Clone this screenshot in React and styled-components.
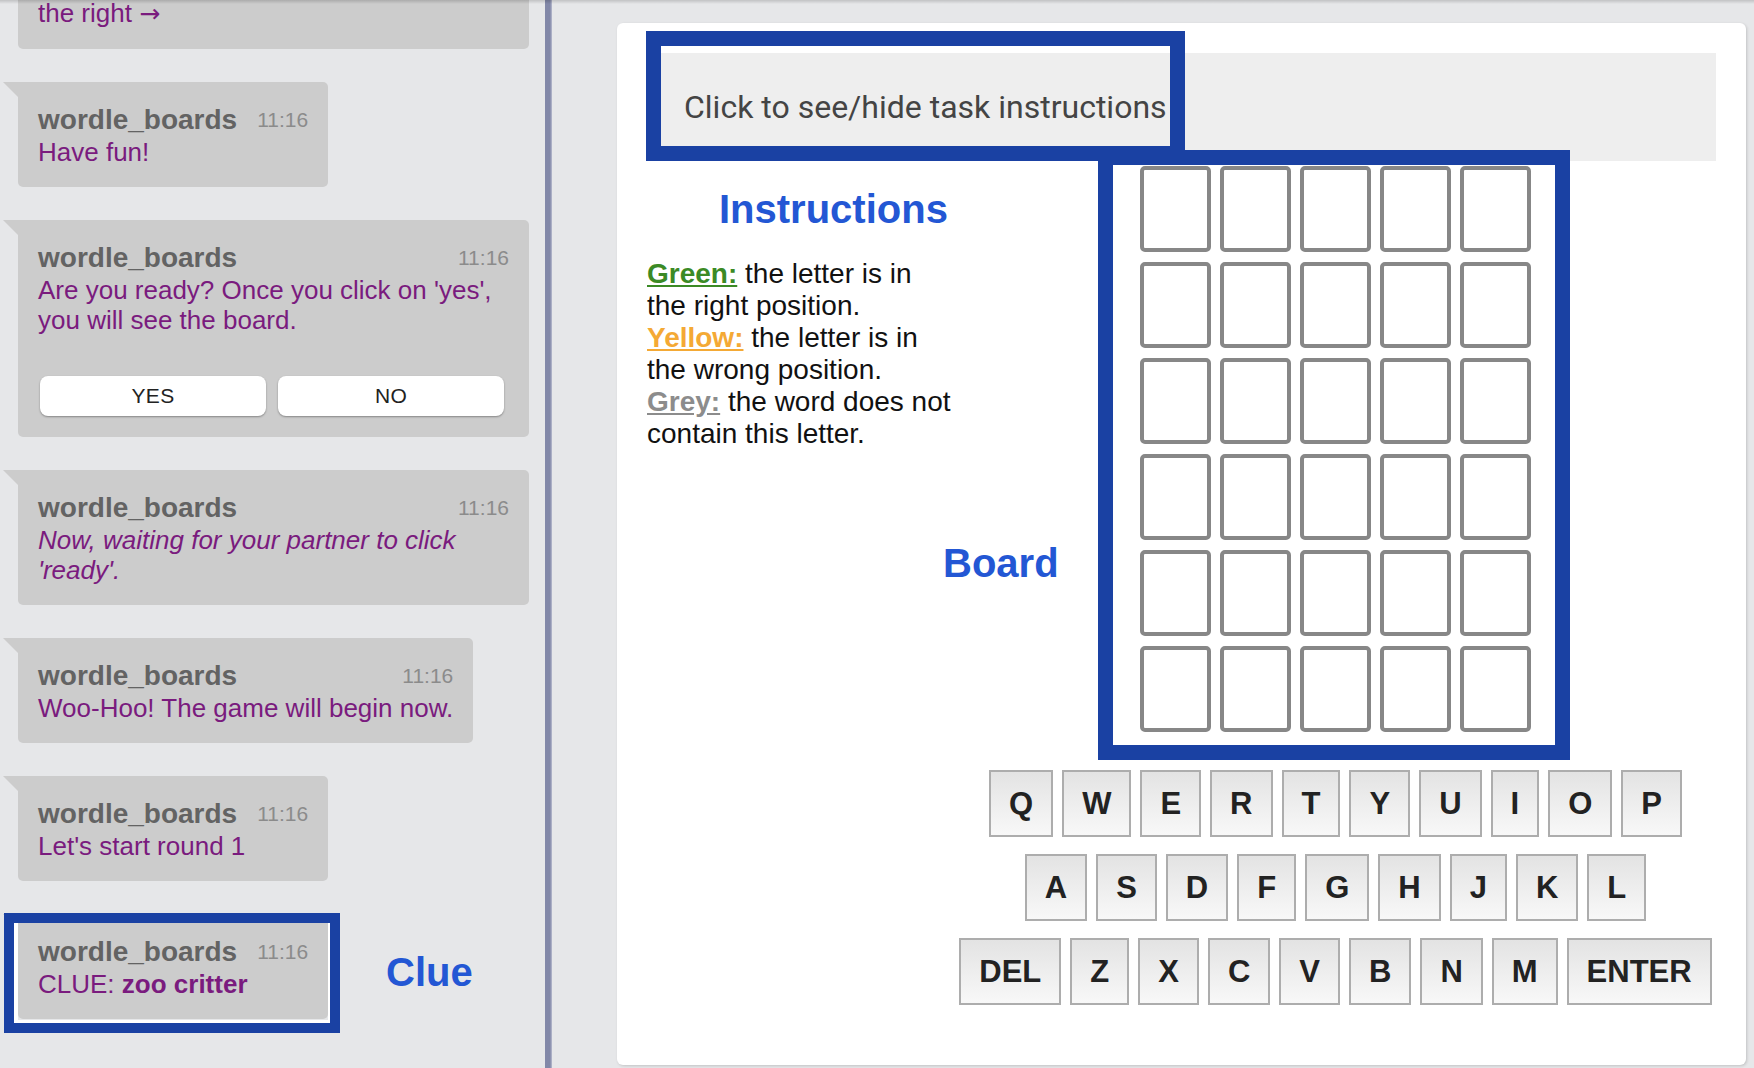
import React from "react";
import styled, { createGlobalStyle } from "styled-components";

const GlobalStyle = createGlobalStyle`
  html, body {
    margin: 0;
    padding: 0;
  }
  body {
    background: #e6e7e9;
    font-family: "Liberation Sans", Arial, sans-serif;
    overflow: hidden;
  }
`;

const Page = styled.div`
  position: relative;
  display: flex;
  width: 1754px;
  height: 1068px;
  overflow: hidden;
  background: #e6e7e9;

  &::after {
    content: "";
    position: absolute;
    left: 0;
    right: 0;
    top: 0;
    height: 4px;
    background: linear-gradient(rgba(0, 0, 0, 0.16), rgba(0, 0, 0, 0));
    pointer-events: none;
  }
`;

/* ---------- chat ---------- */

const ChatPanel = styled.aside`
  width: 545px;
  flex-shrink: 0;
  display: flex;
  flex-direction: column;
  justify-content: flex-end;
  align-items: flex-start;
  gap: 33px;
  padding: 0 16px 49px 18px;
  box-sizing: border-box;
  overflow: hidden;
`;

const Bubble = styled.div`
  position: relative;
  flex-shrink: 0;
  max-width: 100%;
  box-sizing: border-box;
  background: #cccccc;
  border-radius: 0 5px 5px 5px;
  padding: 21px 20px 20px;

  &::before {
    content: "";
    position: absolute;
    left: -15px;
    top: 0;
    width: 0;
    height: 0;
    border-top: 15px solid #cccccc;
    border-left: 15px solid transparent;
  }
`;

const BubbleHead = styled.div`
  display: flex;
  justify-content: space-between;
  align-items: center;
  gap: 20px;
`;

const Sender = styled.span`
  font-size: 28px;
  line-height: 34px;
  font-weight: bold;
  color: #636363;
  white-space: nowrap;
`;

const Time = styled.span`
  font-size: 21px;
  line-height: 24px;
  color: #8b8b8b;
`;

const Message = styled.div`
  font-size: 26px;
  line-height: 30px;
  color: #7a1b7e;
  font-style: ${(p) => (p.$italic ? "italic" : "normal")};

  b {
    font-weight: bold;
  }
`;

const Arrow = styled.span`
  font-family: "DejaVu Sans", sans-serif;
  font-size: 25px;
`;

const ButtonRow = styled.div`
  display: flex;
  gap: 12px;
  margin: 41px 0 1px;
  padding: 0 5px 0 2px;
`;

const ChatButton = styled.button`
  flex: 1;
  height: 40px;
  border: none;
  border-radius: 8px;
  background: #ffffff;
  box-shadow: 0 1px 2px rgba(0, 0, 0, 0.35);
  font-family: "Liberation Sans", Arial, sans-serif;
  font-size: 21px;
  letter-spacing: 0.3px;
  color: #222222;
`;

const Divider = styled.div`
  width: 7px;
  flex-shrink: 0;
  background: linear-gradient(90deg, #8288a8 0%, #8288a8 72%, #b9bccf 100%);
`;

/* ---------- task ---------- */

const Main = styled.main`
  flex: 1;
  display: flex;
  padding: 23px 8px 3px 65px;
  box-sizing: border-box;
`;

const Card = styled.section`
  flex: 1;
  display: flex;
  flex-direction: column;
  background: #ffffff;
  border-radius: 6px;
  padding: 30px;
  box-shadow: 1px 1px 3px rgba(0, 0, 0, 0.16);
  box-sizing: border-box;
`;

const InstructionsToggle = styled.div`
  height: 108px;
  flex-shrink: 0;
  display: flex;
  align-items: center;
  padding-left: 37px;
  background: #eeeeee;
  font-family: Roboto, "Liberation Sans", sans-serif;
  font-size: 32px;
  color: #444444;
`;

const Content = styled.div`
  display: flex;
`;

const InstructionsCol = styled.div`
  width: 308px;
  flex-shrink: 0;
`;

const Heading = styled.h2`
  margin: 25px 0 26px 72px;
  font-size: 40px;
  line-height: 46px;
  font-weight: bold;
  color: #2357d4;
  white-space: nowrap;
`;

const Rules = styled.div`
  font-size: 28px;
  line-height: 32px;
  color: #111111;
`;

const Swatch = styled.span`
  font-weight: bold;
  text-decoration: underline;
  color: ${(p) => p.$color};
`;

const GameCol = styled.div`
  flex: 1;
  display: flex;
  flex-direction: column;
  align-items: center;
`;

const Grid = styled.div`
  margin-top: 5px;
  display: grid;
  grid-template-columns: repeat(5, 71px);
  grid-auto-rows: 86px;
  column-gap: 9px;
  row-gap: 10px;
`;

const Tile = styled.div`
  border: 4px solid #878787;
  border-radius: 5px;
  box-sizing: border-box;
`;

const Keyboard = styled.div`
  margin-top: 38px;
  display: flex;
  flex-direction: column;
  align-items: center;
  gap: 17px;
`;

const KeyRow = styled.div`
  display: flex;
  gap: 9px;
`;

const Key = styled.div`
  height: 67px;
  padding: 0 18px;
  display: flex;
  align-items: center;
  justify-content: center;
  box-sizing: border-box;
  border: 2px solid #adadad;
  background: linear-gradient(#e3e3e3, #f8f8f8);
  font-size: 31px;
  font-weight: bold;
  color: #222222;
`;

/* ---------- annotation overlay ---------- */

const Frame = styled.div`
  position: absolute;
  left: ${(p) => p.$x}px;
  top: ${(p) => p.$y}px;
  width: ${(p) => p.$w}px;
  height: ${(p) => p.$h}px;
  box-sizing: border-box;
  border: ${(p) => p.$t}px solid #1a41a3;
  box-shadow: ${(p) => (p.$inner ? "inset 4px 0 #fff, inset -2px 0 #fff, inset 0 -3px #fff" : "none")};
  pointer-events: none;
`;

const Label = styled.div`
  position: absolute;
  left: ${(p) => p.$x}px;
  top: ${(p) => p.$y}px;
  font-size: 40px;
  line-height: 46px;
  font-weight: bold;
  color: #2357d4;
`;

const messages = [
  {
    time: "11:16",
    text: (
      <>
        Welcome! You and your partner will play a word guessing game together.
        The task instructions are shown on
        <br />
        the right <Arrow>→</Arrow>
      </>
    ),
  },
  { time: "11:16", text: "Have fun!" },
  {
    time: "11:16",
    text: "Are you ready? Once you click on 'yes', you will see the board.",
    buttons: true,
  },
  {
    time: "11:16",
    text: "Now, waiting for your partner to click 'ready'.",
    italic: true,
  },
  { time: "11:16", text: "Woo-Hoo! The game will begin now." },
  { time: "11:16", text: "Let's start round 1" },
  {
    time: "11:16",
    text: (
      <>
        CLUE: <b>zoo critter</b>
      </>
    ),
  },
];

const keyRows = [
  ["Q", "W", "E", "R", "T", "Y", "U", "I", "O", "P"],
  ["A", "S", "D", "F", "G", "H", "J", "K", "L"],
  ["DEL", "Z", "X", "C", "V", "B", "N", "M", "ENTER"],
];

const App = () => {
  return (
    <Page>
      <GlobalStyle />
      <ChatPanel>
        {messages.map((m, i) => (
          <Bubble key={i}>
            <BubbleHead>
              <Sender>wordle_boards</Sender>
              <Time>{m.time}</Time>
            </BubbleHead>
            <Message $italic={m.italic}>{m.text}</Message>
            {m.buttons && (
              <ButtonRow>
                <ChatButton>YES</ChatButton>
                <ChatButton>NO</ChatButton>
              </ButtonRow>
            )}
          </Bubble>
        ))}
      </ChatPanel>
      <Divider />
      <Main>
        <Card>
          <InstructionsToggle>Click to see/hide task instructions</InstructionsToggle>
          <Content>
            <InstructionsCol>
              <Heading>Instructions</Heading>
              <Rules>
                <div>
                  <Swatch $color="#3b8a25">Green:</Swatch> the letter is in the
                  right position.
                </div>
                <div>
                  <Swatch $color="#f4a935">Yellow:</Swatch> the letter is in the
                  wrong position.
                </div>
                <div>
                  <Swatch $color="#8c8c8c">Grey:</Swatch> the word does not
                  contain this letter.
                </div>
              </Rules>
            </InstructionsCol>
            <GameCol>
              <Grid>
                {Array.from({ length: 30 }, (_, i) => (
                  <Tile key={i} />
                ))}
              </Grid>
              <Keyboard>
                {keyRows.map((row, r) => (
                  <KeyRow key={r}>
                    {row.map((k) => (
                      <Key key={k}>{k}</Key>
                    ))}
                  </KeyRow>
                ))}
              </Keyboard>
            </GameCol>
          </Content>
        </Card>
      </Main>

      <Frame $x={646} $y={31} $w={539} $h={130} $t={15} />
      <Frame $x={1098} $y={150} $w={472} $h={610} $t={15} />
      <Frame $x={4} $y={913} $w={336} $h={120} $t={10} $inner />
      <Label $x={943} $y={540}>Board</Label>
      <Label $x={386} $y={949}>Clue</Label>
    </Page>
  );
};

export default App;
